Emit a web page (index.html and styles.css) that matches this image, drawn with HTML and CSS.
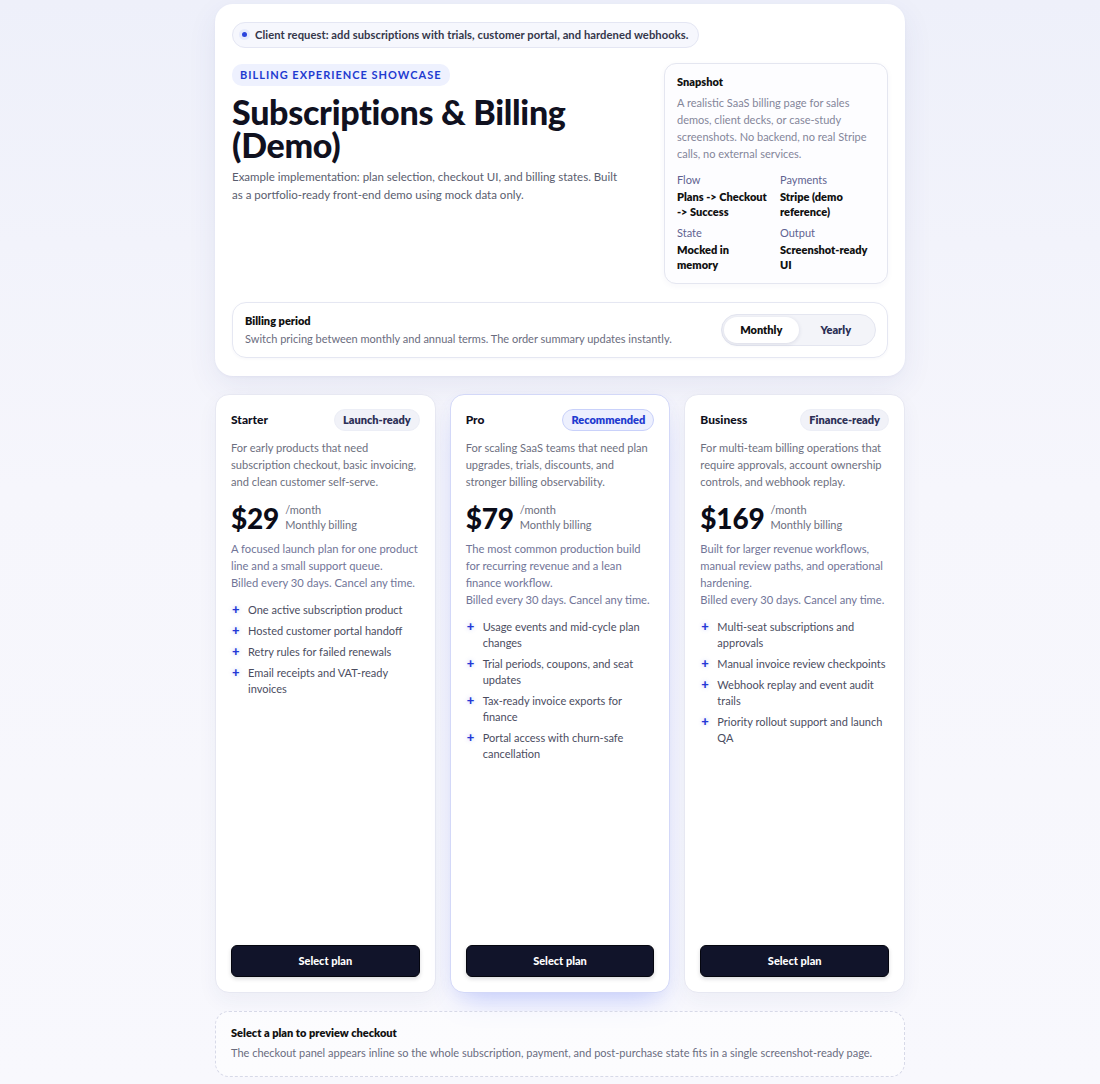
FILE: index.html
```html
<!DOCTYPE html>
<html lang="en">
<head>
<meta charset="utf-8">
<title>Subscriptions &amp; Billing (Demo)</title>
<link rel="stylesheet" href="styles.css">
</head>
<body>
<main class="page">
  <section class="hero">
    <div class="request"><span class="dot"></span>Client request: add subscriptions with trials, customer portal, and hardened webhooks.</div>
    <div class="hero-grid">
      <div class="hero-main">
        <span class="eyebrow">BILLING EXPERIENCE SHOWCASE</span>
        <h1 class="title">Subscriptions &amp; Billing (Demo)</h1>
        <p class="lead">Example implementation: plan selection, checkout UI, and billing states. Built as a portfolio-ready front-end demo using mock data only.</p>
      </div>
      <aside class="snapshot">
        <h2 class="snap-title">Snapshot</h2>
        <p class="snap-desc">A realistic SaaS billing page for sales demos, client decks, or case-study screenshots. No backend, no real Stripe calls, no external services.</p>
        <dl class="snap-grid">
          <div><dt>Flow</dt><dd>Plans -&gt; Checkout -&gt; Success</dd></div>
          <div><dt>Payments</dt><dd>Stripe (demo reference)</dd></div>
          <div><dt>State</dt><dd>Mocked in memory</dd></div>
          <div><dt>Output</dt><dd>Screenshot-ready UI</dd></div>
        </dl>
      </aside>
    </div>
    <div class="period">
      <div class="period-text">
        <div class="period-title">Billing period</div>
        <div class="period-desc">Switch pricing between monthly and annual terms. The order summary updates instantly.</div>
      </div>
      <div class="toggle">
        <button class="toggle-btn active">Monthly</button>
        <button class="toggle-btn">Yearly</button>
      </div>
    </div>
  </section>

  <section class="plans">
    <article class="plan">
      <header class="plan-head"><h3 class="plan-name">Starter</h3><span class="badge">Launch-ready</span></header>
      <p class="plan-desc">For early products that need subscription checkout, basic invoicing, and clean customer self-serve.</p>
      <div class="price"><span class="amount">$29</span><span class="per">/month<br>Monthly billing</span></div>
      <p class="note">A focused launch plan for one product line and a small support queue.<br>Billed every 30 days. Cancel any time.</p>
      <ul class="features">
        <li>One active subscription product</li>
        <li>Hosted customer portal handoff</li>
        <li>Retry rules for failed renewals</li>
        <li>Email receipts and VAT-ready invoices</li>
      </ul>
      <button class="select">Select plan</button>
    </article>
    <article class="plan featured">
      <header class="plan-head"><h3 class="plan-name">Pro</h3><span class="badge blue">Recommended</span></header>
      <p class="plan-desc">For scaling SaaS teams that need plan upgrades, trials, discounts, and stronger billing observability.</p>
      <div class="price"><span class="amount">$79</span><span class="per">/month<br>Monthly billing</span></div>
      <p class="note">The most common production build for recurring revenue and a lean finance workflow.<br>Billed every 30 days. Cancel any time.</p>
      <ul class="features">
        <li>Usage events and mid-cycle plan changes</li>
        <li>Trial periods, coupons, and seat updates</li>
        <li>Tax-ready invoice exports for finance</li>
        <li>Portal access with churn-safe cancellation</li>
      </ul>
      <button class="select">Select plan</button>
    </article>
    <article class="plan">
      <header class="plan-head"><h3 class="plan-name">Business</h3><span class="badge">Finance-ready</span></header>
      <p class="plan-desc">For multi-team billing operations that require approvals, account ownership controls, and webhook replay.</p>
      <div class="price"><span class="amount">$169</span><span class="per">/month<br>Monthly billing</span></div>
      <p class="note">Built for larger revenue workflows, manual review paths, and operational hardening.<br>Billed every 30 days. Cancel any time.</p>
      <ul class="features">
        <li>Multi-seat subscriptions and approvals</li>
        <li>Manual invoice review checkpoints</li>
        <li>Webhook replay and event audit trails</li>
        <li>Priority rollout support and launch QA</li>
      </ul>
      <button class="select">Select plan</button>
    </article>
  </section>

  <section class="checkout">
    <div class="checkout-title">Select a plan to preview checkout</div>
    <div class="checkout-desc">The checkout panel appears inline so the whole subscription, payment, and post-purchase state fits in a single screenshot-ready page.</div>
  </section>
</main>
</body>
</html>
```

FILE: styles.css
```css
* { box-sizing: border-box; }
html, body { margin: 0; padding: 0; }
body {
  font-family: "Lato", "Noto Sans", sans-serif;
  color: #14152a;
  background: linear-gradient(180deg, #eef0fa 0%, #f6f6fc 45%, #f8f8fd 100%);
  min-height: 1084px;
  padding: 4px 0 0 20px;
}
.page {
  width: 690px;
  margin: 0 auto;
  display: flex;
  flex-direction: column;
  gap: 18px;
}
.hero {
  background: #fff;
  border-radius: 18px;
  padding: 17px 17px 18px;
  box-shadow: 0 10px 30px rgba(50, 60, 140, 0.08), 0 1px 3px rgba(50, 60, 140, 0.05);
}
.request {
  display: inline-flex;
  align-items: center;
  gap: 8px;
  height: 26px;
  padding: 0 10px 0 9px;
  border: 1px solid #e4e6f3;
  background: #f6f7fd;
  border-radius: 13px;
  font-size: 11.2px;
  font-weight: 700;
  letter-spacing: 0.06px;
  color: #34364a;
}
.dot { width: 5px; height: 5px; border-radius: 50%; background: #2b44dc; box-shadow: 0 0 0 3px #e6eafc; }
.hero-grid {
  display: grid;
  grid-template-columns: 1fr 224px;
  gap: 24px;
  margin-top: 15px;
}
.eyebrow {
  display: inline-block;
  background: #eef1fe;
  color: #1f3bd0;
  font-size: 11px;
  font-weight: 700;
  letter-spacing: 1px;
  padding: 4px 8px;
  line-height: 14px;
  border-radius: 10px;
}
.title {
  margin: 9px 0 0;
  font-size: 34px;
  line-height: 33px;
  font-weight: 900;
  color: #10111f;
  letter-spacing: -0.3px;
  max-width: 380px;
}
.lead {
  margin: 7px 0 0;
  font-size: 11.5px;
  line-height: 18px;
  color: #5a5d6e;
  max-width: 395px;
}
.snapshot {
  border: 1px solid #e4e6f0;
  border-radius: 12px;
  background: #fdfdff;
  padding: 11px 12px 11px 12px;
  box-shadow: 0 2px 6px rgba(50, 60, 140, 0.04);
}
.snap-title { margin: 0; font-size: 11px; line-height: 14px; font-weight: 800; color: #111; }
.snap-desc { margin: 5px 0 0; font-size: 11px; line-height: 17px; color: #84869a; }
.snap-grid {
  margin: 10px 0 0;
  display: grid;
  grid-template-columns: 1fr 1fr;
  column-gap: 8px;
  row-gap: 6px;
}
.snap-grid dt { font-size: 11px; line-height: 15px; color: #5f6391; }
.snap-grid dd { margin: 2px 0 0; font-size: 11px; line-height: 15px; font-weight: 800; color: #111; }
.period {
  margin-top: 18px;
  display: flex;
  align-items: center;
  justify-content: space-between;
  border: 1px solid #e5e7f2;
  border-radius: 14px;
  padding: 9px 11px 9px 12px;
  box-shadow: 0 1px 3px rgba(50, 60, 140, 0.04);
}
.period-title { font-size: 11px; line-height: 18px; font-weight: 800; color: #111; }
.period-desc { font-size: 11px; line-height: 18px; color: #6a6c7e; }
.toggle {
  display: flex;
  width: 155px;
  height: 32px;
  padding: 2px;
  border-radius: 16px;
  background: #f3f4f9;
  border: 1px solid #e4e6f0;
}
.toggle-btn {
  flex: 1;
  border: 0;
  background: transparent;
  border-radius: 14px;
  font-family: inherit;
  font-size: 11px;
  font-weight: 800;
  color: #2b2f55;
  cursor: pointer;
}
.toggle-btn.active { background: #fff; color: #111; box-shadow: 0 1px 4px rgba(30, 40, 90, 0.12); }

.plans {
  display: grid;
  grid-template-columns: repeat(3, 1fr);
  gap: 14px;
}
.plan {
  display: flex;
  flex-direction: column;
  min-height: 599px;
  background: #fff;
  border: 1px solid #e7e8f2;
  border-radius: 14px;
  padding: 13px 15px 15px;
  box-shadow: 0 8px 20px rgba(40, 50, 120, 0.05);
}
.plan.featured {
  border-color: #d3d8f8;
  box-shadow: 0 16px 30px -12px rgba(70, 100, 255, 0.3), 0 4px 14px rgba(70, 90, 200, 0.05);
}
.plan-head { display: flex; align-items: center; justify-content: space-between; height: 24px; }
.plan-name { margin: 0; font-size: 12px; font-weight: 900; color: #0e0f1c; }
.badge {
  font-size: 11px;
  font-weight: 800;
  color: #2d3056;
  background: #f1f2f8;
  border: 1px solid #eceef6;
  border-radius: 11px;
  padding: 3px 8px;
  line-height: 14px;
}
.badge.blue { color: #1f3bd0; background: #edf0fe; border-color: #c9d1fa; }
.plan-desc { margin: 7px 0 0; font-size: 11.1px; line-height: 17px; color: #6d6f80; }
.price { display: flex; align-items: flex-end; gap: 6px; margin-top: 12px; }
.amount { font-size: 28px; font-weight: 900; line-height: 28px; color: #0b0c18; letter-spacing: -0.2px; }
.per { font-size: 11px; line-height: 15px; color: #6d6f80; }
.note { margin: 8px 0 0; font-size: 11.2px; line-height: 17px; color: #717598; }
.features { list-style: none; margin: 11px 0 0; padding: 0; display: flex; flex-direction: column; gap: 5px; }
.features li {
  position: relative;
  padding-left: 17px;
  font-size: 11px;
  line-height: 16px;
  color: #4b4d5f;
}
.features li::before {
  content: "+";
  position: absolute;
  left: 1px;
  top: -1px;
  font-weight: 900;
  font-size: 13px;
  color: #2438d6;
  text-shadow: 0 0 4px rgba(80, 100, 240, 0.35);
}
.select {
  margin-top: auto;
  height: 32px;
  border-radius: 6px;
  background: #11142a;
  border: 1px solid #05060f;
  color: #fff;
  font-family: inherit;
  font-size: 11px;
  font-weight: 900;
  cursor: pointer;
  box-shadow: 0 2px 4px rgba(10, 12, 30, 0.15);
}
.checkout {
  border: 1px dashed #d7d9e8;
  border-radius: 14px;
  background: rgba(255, 255, 255, 0.5);
  padding: 12px 15px 14px;
}
.checkout-title { font-size: 11px; line-height: 18px; font-weight: 800; color: #111; }
.checkout-desc { margin-top: 2px; font-size: 11px; line-height: 18px; color: #6a6c7e; }
```
